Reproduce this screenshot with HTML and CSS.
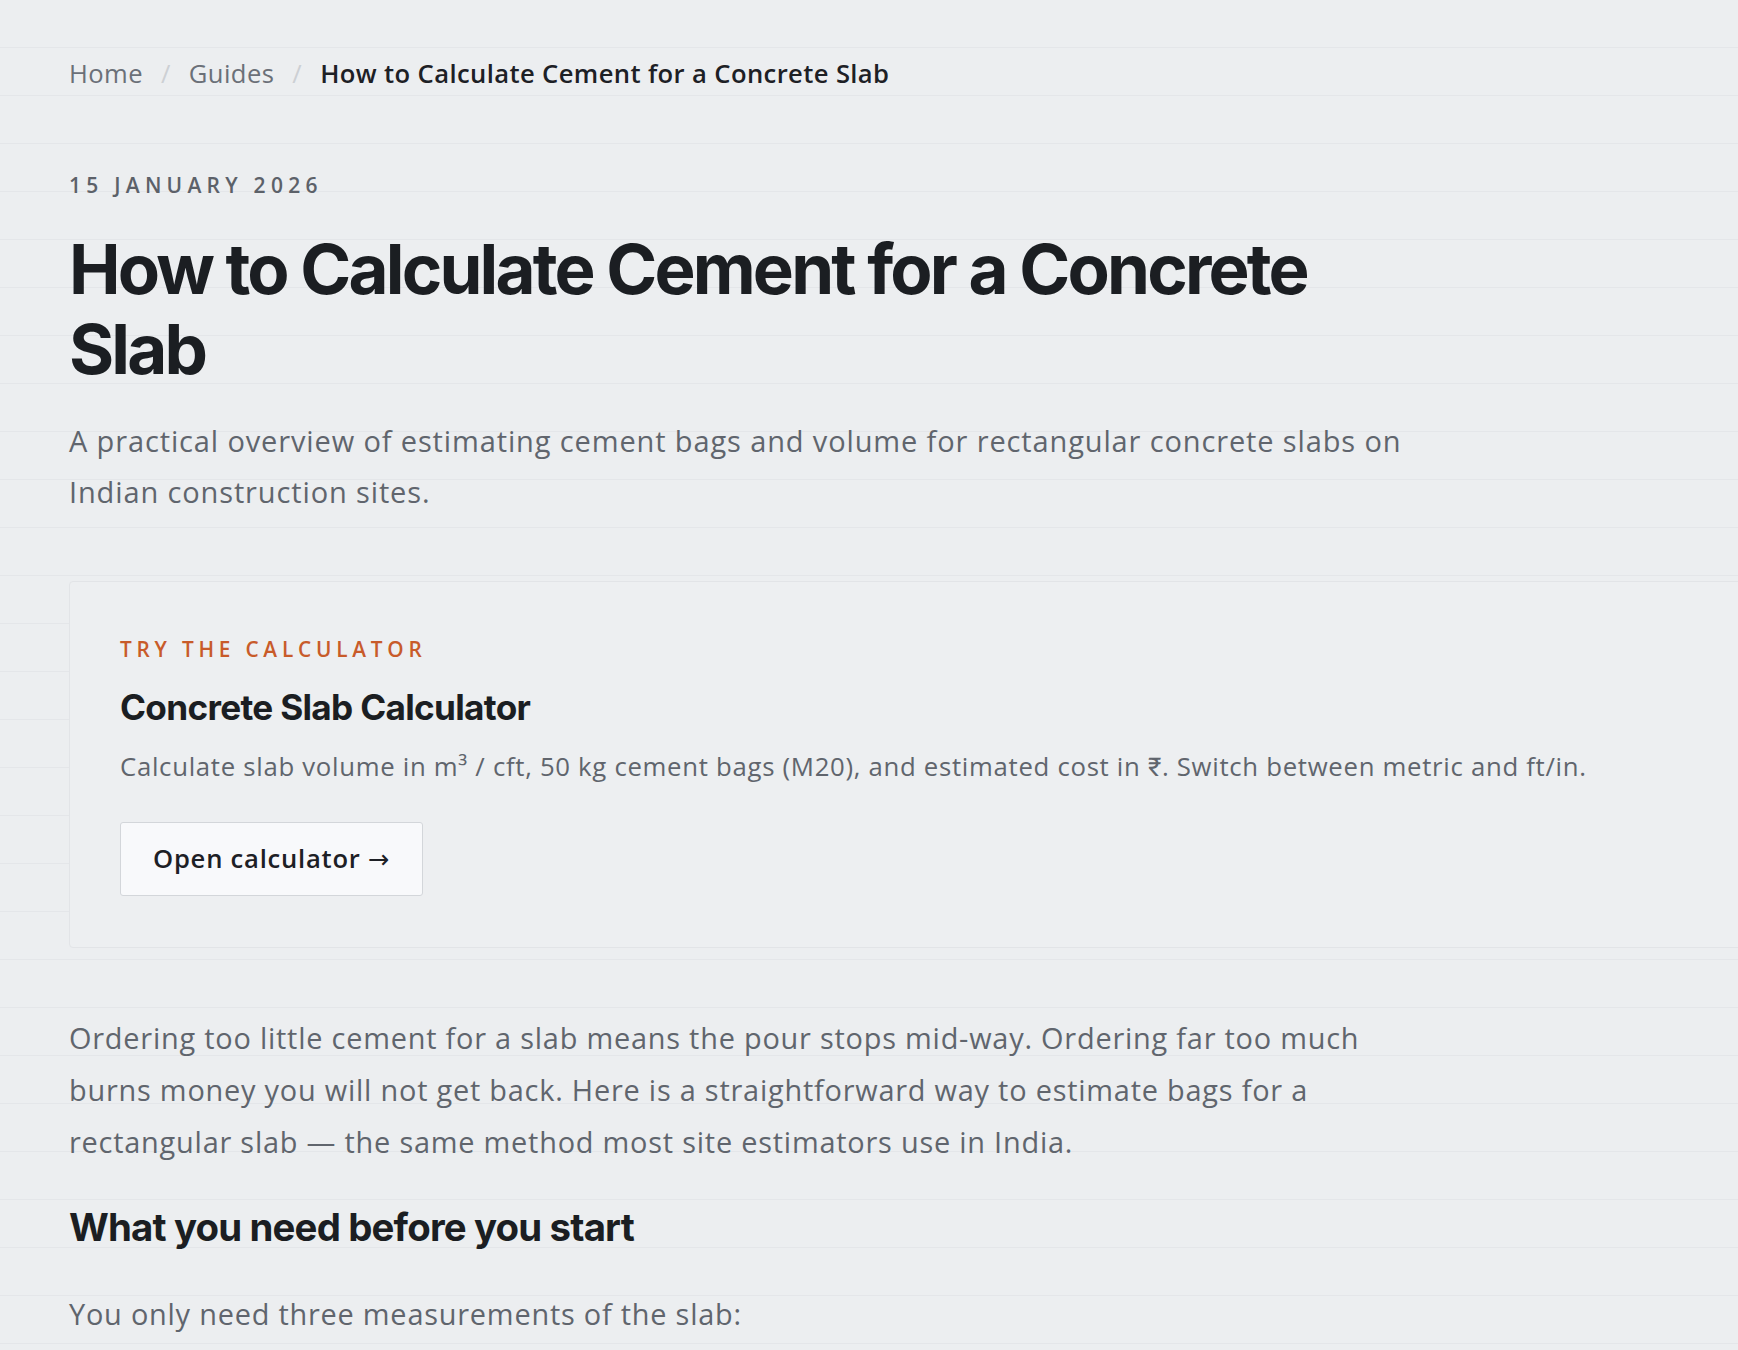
FILE: index.html
```html
<!DOCTYPE html>
<html lang="en">
<head>
<meta charset="utf-8">
<title>How to Calculate Cement for a Concrete Slab</title>
<link rel="stylesheet" href="styles.css">
</head>
<body>
<main class="page">
  <nav class="crumbs">
    <a class="crumb" href="#">Home</a>
    <span class="sep">/</span>
    <a class="crumb" href="#">Guides</a>
    <span class="sep">/</span>
    <span class="crumb current">How to Calculate Cement for a Concrete Slab</span>
  </nav>

  <div class="date">15 January 2026</div>
  <h1 class="title">How to Calculate Cement for a Concrete Slab</h1>
  <p class="lede">A practical overview of estimating cement bags and volume for rectangular concrete slabs on Indian construction sites.</p>

  <section class="card">
    <div class="eyebrow">Try the calculator</div>
    <h3 class="card-title">Concrete Slab Calculator</h3>
    <p class="card-desc">Calculate slab volume in m³ / cft, 50 kg cement bags (M20), and estimated cost in ₹. Switch between metric and ft/in.</p>
    <a class="btn" href="#">Open calculator <span class="arrow">→</span></a>
  </section>

  <p class="body-text">Ordering too little cement for a slab means the pour stops mid-way. Ordering far too much burns money you will not get back. Here is a straightforward way to estimate bags for a rectangular slab — the same method most site estimators use in India.</p>
  <h2 class="section-title">What you need before you start</h2>
  <p class="body-text tight">You only need three measurements of the slab:</p>
</main>
</body>
</html>
```
FILE: styles.css
```css
html, body {
  margin: 0;
  padding: 0;
}
body {
  background-color: #eceef0;
  background-image: repeating-linear-gradient(to bottom, transparent 0, transparent 47px, #e4e6e9 47px, #e4e6e9 48px);
  font-family: "Open Sans", Roboto, sans-serif;
  letter-spacing: 0.026em;
  color: #1d2025;
  overflow-x: hidden;
  min-height: 1350px;
}
.page {
  padding: 55px 0 0 69px;
}
.crumbs {
  font-size: 25.6px;
  line-height: 38px;
  display: flex;
  align-items: center;
}
.crumb {
  color: #6b7078;
  text-decoration: none;
}
.sep {
  color: #cdd0d4;
  margin: 0 18px 0 18px;
}
.crumb.current {
  color: #1d2025;
  font-weight: 600;
  letter-spacing: 0.015em;
}
.date {
  margin-top: 77px;
  font-size: 21px;
  line-height: 31px;
  font-weight: 600;
  letter-spacing: 0.25em;
  text-transform: uppercase;
  color: #5c6169;
}
.title {
  margin: 28px 0 0;
  max-width: 1344px;
  font-family: Inter, "Liberation Sans", sans-serif;
  font-weight: 700;
  font-size: 69px;
  line-height: 80px;
  letter-spacing: -0.041em;
  color: #1b1e22;
}
.lede {
  margin: 26px 0 0;
  max-width: 1362px;
  font-size: 29px;
  line-height: 51px;
  letter-spacing: 0.03em;
  color: #60656d;
}
.card {
  margin-top: 64px;
  width: 1800px;
  box-sizing: border-box;
  padding: 52px 50px 51px;
  border: 1px solid #e2e4e7;
  border-radius: 4px;
  background: #edeff1;
}
.eyebrow {
  font-size: 20.8px;
  line-height: 31px;
  font-weight: 600;
  letter-spacing: 0.23em;
  text-transform: uppercase;
  color: #c85b2a;
}
.card-title {
  margin: 19px 0 0;
  font-family: Inter, "Liberation Sans", sans-serif;
  font-weight: 700;
  font-size: 35.2px;
  line-height: 46px;
  letter-spacing: -0.02em;
  color: #1b1e22;
}
.card-desc {
  margin: 16px 0 0;
  font-size: 25.75px;
  line-height: 41px;
  letter-spacing: 0.027em;
  color: #60656d;
}
.btn {
  display: inline-block;
  margin-top: 35px;
  box-sizing: border-box;
  height: 74px;
  padding: 0 32px 0 32px;
  line-height: 71px;
  font-size: 25.6px;
  font-weight: 600;
  letter-spacing: 0.03em;
  color: #1d2025;
  text-decoration: none;
  background: #f8f9fb;
  border: 1.5px solid #d3d6da;
  border-radius: 3px;
}
.arrow {
  font-family: "DejaVu Sans", sans-serif;
  font-weight: 400;
}
.body-text {
  margin: 64px 0 0;
  max-width: 1350px;
  font-size: 28.9px;
  line-height: 52px;
  letter-spacing: 0.027em;
  color: #60656d;
}
.section-title {
  margin: 34px 0 0;
  font-family: Inter, "Liberation Sans", sans-serif;
  font-weight: 700;
  font-size: 38.4px;
  line-height: 50px;
  letter-spacing: -0.022em;
  color: #1b1e22;
}
.body-text.tight {
  margin-top: 36px;
}
```
